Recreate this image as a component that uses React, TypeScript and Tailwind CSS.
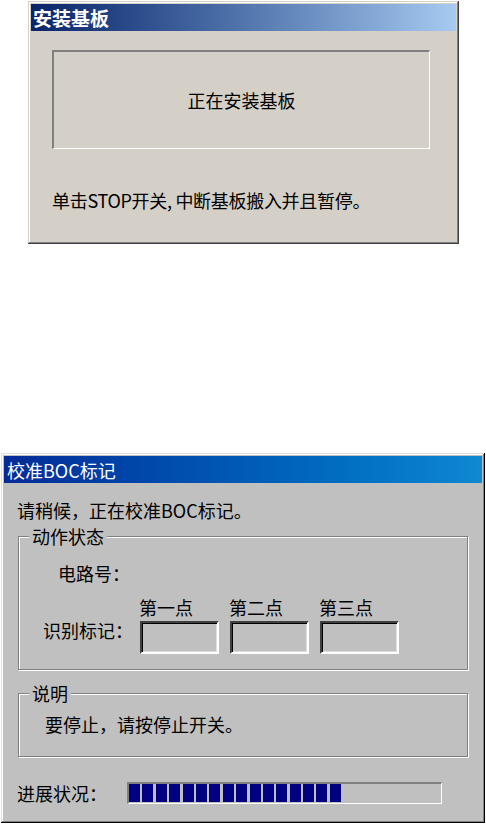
import React from "react";

function GroupBox({
  label,
  className,
  children,
}: {
  label: string;
  className: string;
  children?: React.ReactNode;
}) {
  return (
    <div
      className={`relative border border-[#808080] shadow-[inset_1px_1px_0_#ffffff,1px_1px_0_#ffffff] flex flex-col ${className}`}
    >
      <div className="absolute left-[10px] top-[-11px] px-[3px] bg-[#c0c0c0] leading-[20px]">
        {label}
      </div>
      {children}
    </div>
  );
}

function EditBox() {
  return (
    <div className="w-[79px] h-[33px] bg-[#c0c0c0] border-2 border-t-[#404040] border-l-[#404040] border-b-white border-r-white shadow-[inset_1px_1px_0_#000000,inset_-1px_-1px_0_#dfdfdf]" />
  );
}

export default function App() {
  const blocks = Array.from({ length: 16 }, (_, i) => i);
  return (
    <div className="w-[486px] min-h-[826px] bg-white flex flex-col items-start font-['Noto_Sans_CJK_SC','Noto_Sans',sans-serif] text-black leading-[20px]">
      {/* Top dialog */}
      <div className="ml-[28px] mt-[1px] w-[431px] h-[243px] bg-[#d4d0c8] p-[3px] flex flex-col shadow-[inset_-1px_-1px_0_#404040,inset_1px_1px_0_#d4d0c8,inset_-2px_-2px_0_#808080,inset_2px_2px_0_#ffffff]">
        <div className="h-[27px] bg-linear-to-r from-[#0a246a] to-[#a6caf0] flex items-center pl-[2px] text-white font-bold text-[19px]">
          安装基板
        </div>
        <div className="ml-[21px] mt-[19px] w-[378px] h-[99px] border-t-2 border-l-2 border-t-[#808080] border-l-[#808080] border-b border-r border-b-white border-r-white flex items-center justify-center text-[18px]">
          正在安装基板
        </div>
        <div className="ml-[21px] mt-[41px] text-[18px] tracking-[-0.3px]">
          单击STOP开关, 中断基板搬入并且暂停。
        </div>
      </div>

      {/* Bottom dialog */}
      <div className="ml-[1px] mt-[209px] w-[484px] h-[370px] bg-[#c0c0c0] p-[3px] flex flex-col text-[18px] shadow-[inset_-1px_-1px_0_#000000,inset_1px_1px_0_#dfdfdf,inset_-2px_-2px_0_#808080,inset_2px_2px_0_#ffffff]">
        <div className="h-[27px] bg-linear-to-r from-[#062a98] to-[#1088d2] flex items-center pl-[3px] text-white text-[18px]">
          校准BOC标记
        </div>
        <div className="ml-[13px] mt-[17px]">请稍候，正在校准BOC标记。</div>

        <GroupBox label="动作状态" className="ml-[14px] mt-[16px] w-[450px] h-[134px]">
          <div className="ml-[39px] mt-[26px]">电路号：</div>
          <div className="flex ml-[24px] mt-[14px]">
            <div className="w-[97px] mt-[23px]">识别标记：</div>
            <div className="flex gap-[11px]">
              {["第一点", "第二点", "第三点"].map((t) => (
                <div key={t} className="flex flex-col gap-[4px]">
                  <div className="-ml-[1px]">{t}</div>
                  <EditBox />
                </div>
              ))}
            </div>
          </div>
        </GroupBox>

        <GroupBox label="说明" className="ml-[14px] mt-[23px] w-[450px] h-[64px]">
          <div className="ml-[26px] mt-[20px]">要停止，请按停止开关。</div>
        </GroupBox>

        <div className="flex items-center ml-[13px] mt-[25px]">
          <div className="w-[110px]">进展状况：</div>
          <div className="w-[315px] h-[22px] border-t-2 border-l-2 border-b border-r border-t-[#808080] border-l-[#808080] border-b-white border-r-white flex gap-[2.4px]">
            {blocks.map((b) => (
              <div key={b} className="w-[11px] h-[18px] bg-[#000080]" />
            ))}
          </div>
        </div>
      </div>
    </div>
  );
}
